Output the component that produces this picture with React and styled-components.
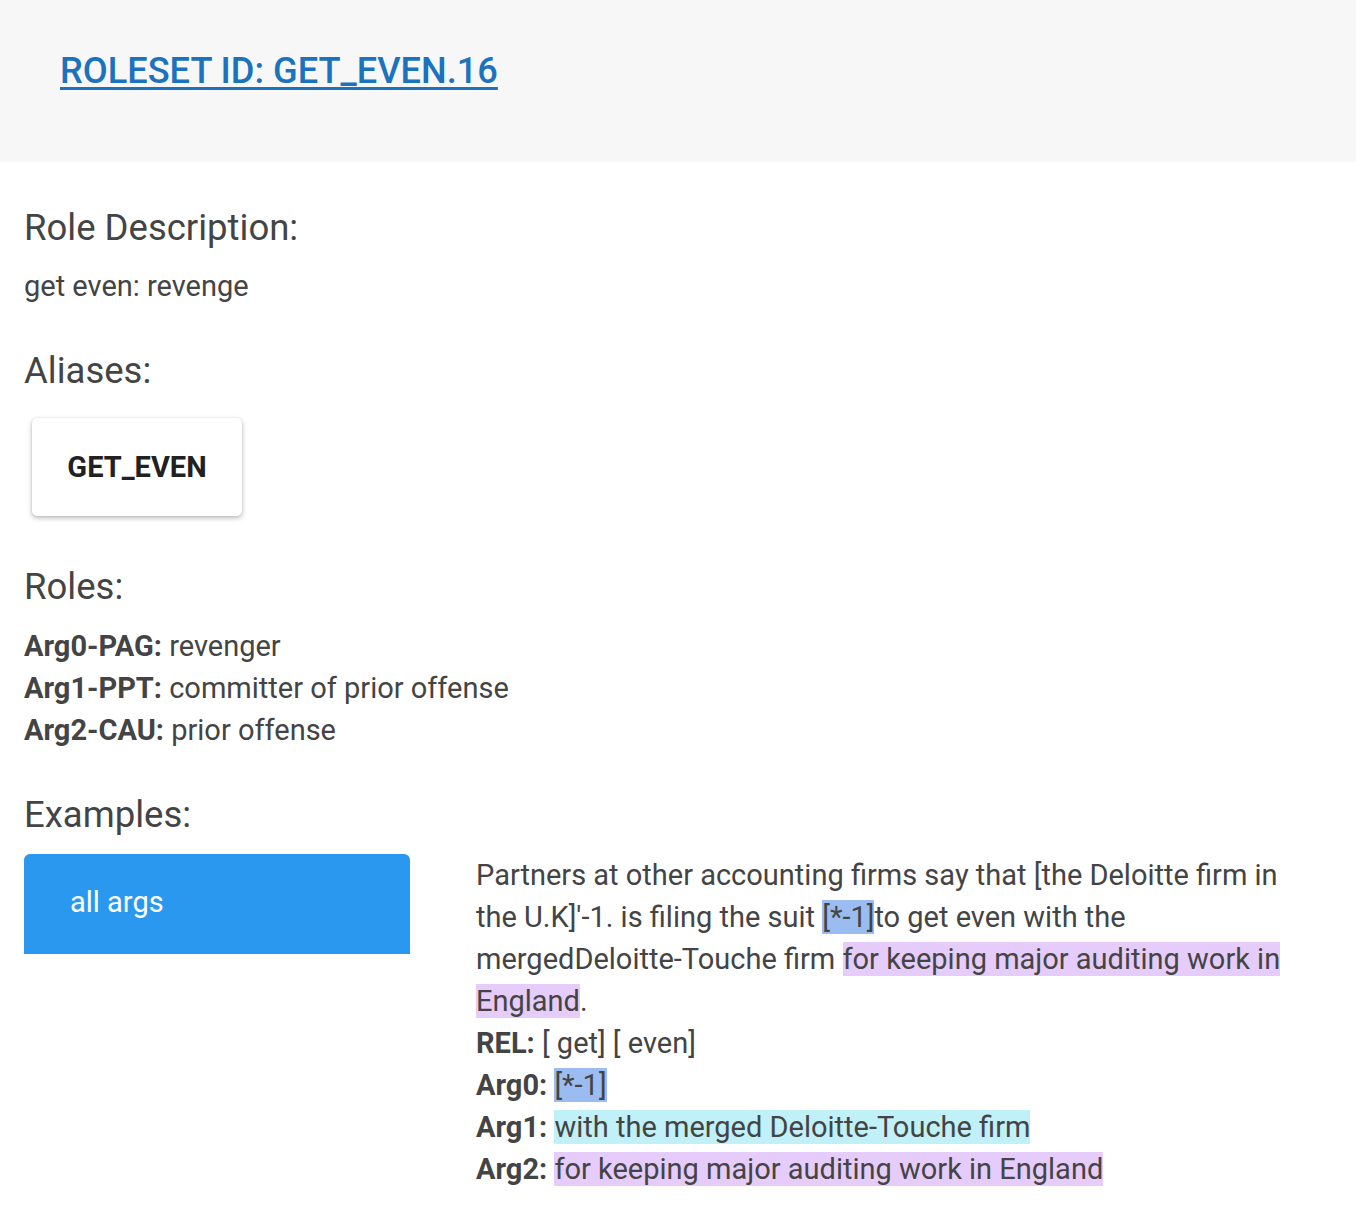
import React from "react";
import styled, { createGlobalStyle } from "styled-components";

const Global = createGlobalStyle`
  html, body { margin: 0; padding: 0; background: #fff; }
  body { font-family: Roboto, "Noto Sans", sans-serif; color: #444; }
`;

const Header = styled.header`
  background: #f7f7f7;
  height: 162px;
  padding: 0 60px;
  display: flex;
  align-items: center;
  box-sizing: border-box;
`;

const TitleLink = styled.a`
  color: #1b72bd;
  font-size: 36.2px;
  font-weight: 500;
  text-decoration: underline;
  text-underline-offset: 4px;
  margin-top: -22px;
`;

const Main = styled.main`
  padding: 0 24px 40px;
`;

const SectionTitle = styled.h2`
  font-size: 36.5px;
  font-weight: 400;
  margin: ${(p) => p.$top}px 0 ${(p) => p.$bottom}px;
  line-height: 44px;
  color: #444;
`;

const Paragraph = styled.p`
  font-size: 29px;
  line-height: 42px;
  margin: 0;
`;

const AliasRow = styled.div`
  display: flex;
  padding: 0 8px;
`;

const AliasCard = styled.div`
  width: 210px;
  height: 98px;
  display: flex;
  align-items: center;
  justify-content: center;
  background: #fff;
  border-radius: 5px;
  box-shadow: 0 2px 5px rgba(0,0,0,0.28), 0 0 2px rgba(0,0,0,0.1);
  font-size: 29px;
  font-weight: 700;
  color: #212121;
`;

const RoleList = styled.div`
  font-size: 29px;
  line-height: 42px;
`;

const Bold = styled.b`
  font-weight: 700;
`;

const ExampleGrid = styled.div`
  display: grid;
  grid-template-columns: 386px 1fr;
  column-gap: 66px;
  align-items: start;
`;

const TabButton = styled.div`
  background: #2a98ee;
  color: #fff;
  height: 100px;
  border-radius: 6px 6px 0 0;
  padding: 27px 46px 0;
  box-sizing: border-box;
  font-size: 29px;
  line-height: 42px;
`;

const ExampleText = styled.div`
  font-size: 29px;
  line-height: 42px;
  padding-right: 40px;
`;

const Mark = styled.span`
  background: ${(p) => p.$c};
`;

const COLORS = { a0: "#9bbcf0", a1: "#c0f0f8", a2: "#e6ccfa" };

export default function App() {
  return (
    <>
      <Global />
      <Header>
        <TitleLink href="#">ROLESET ID: GET_EVEN.16</TitleLink>
      </Header>
      <Main>
        <SectionTitle $top={44} $bottom={15}>Role Description:</SectionTitle>
        <Paragraph>get even: revenge</Paragraph>
        <SectionTitle $top={42} $bottom={25}>Aliases:</SectionTitle>
        <AliasRow>
          <AliasCard>GET_EVEN</AliasCard>
        </AliasRow>
        <SectionTitle $top={49} $bottom={16}>Roles:</SectionTitle>
        <RoleList>
          <div><Bold>Arg0-PAG:</Bold> revenger</div>
          <div><Bold>Arg1-PPT:</Bold> committer of prior offense</div>
          <div><Bold>Arg2-CAU:</Bold> prior offense</div>
        </RoleList>
        <SectionTitle $top={42} $bottom={17}>Examples:</SectionTitle>
        <ExampleGrid>
          <TabButton>all args</TabButton>
          <ExampleText>
            Partners at other accounting firms say that [the Deloitte firm in the U.K]'-1. is filing the suit{" "}
            <Mark $c={COLORS.a0}>[*-1]</Mark>to get even with the mergedDeloitte-Touche firm{" "}
            <Mark $c={COLORS.a2}>for keeping major auditing work in England</Mark>.
            <div><Bold>REL:</Bold> [ get] [ even]</div>
            <div><Bold>Arg0:</Bold> <Mark $c={COLORS.a0}>[*-1]</Mark></div>
            <div><Bold>Arg1:</Bold> <Mark $c={COLORS.a1}>with the merged Deloitte-Touche firm</Mark></div>
            <div><Bold>Arg2:</Bold> <Mark $c={COLORS.a2}>for keeping major auditing work in England</Mark></div>
          </ExampleText>
        </ExampleGrid>
      </Main>
    </>
  );
}
